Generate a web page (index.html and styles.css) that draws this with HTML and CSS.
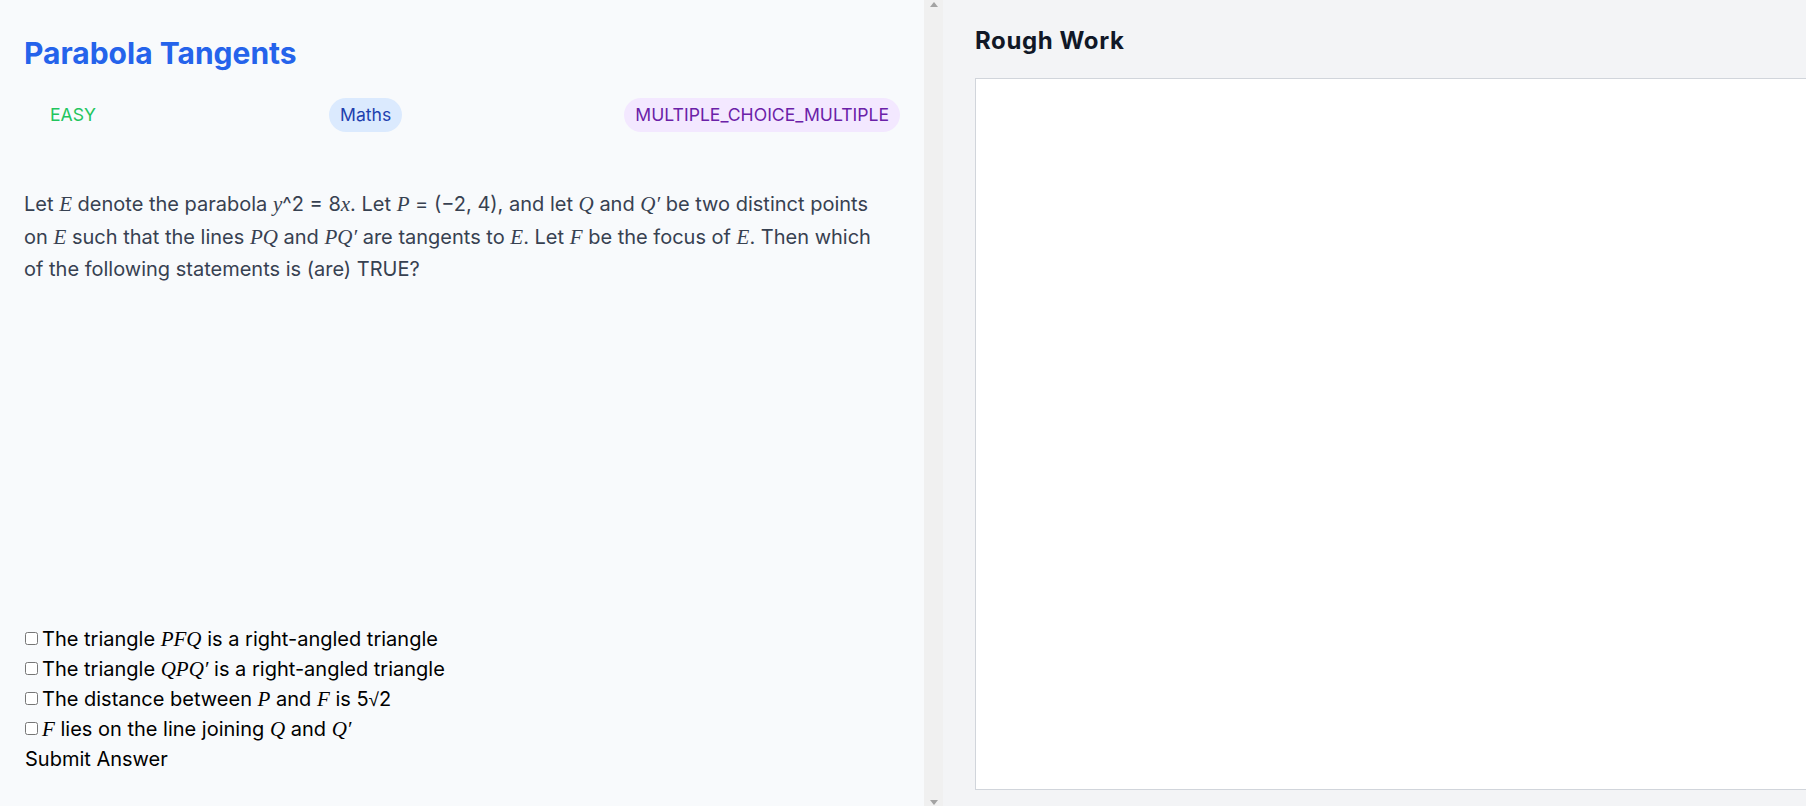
FILE: index.html
```html
<!DOCTYPE html>
<html lang="en">
<head>
<meta charset="utf-8">
<title>Parabola Tangents</title>
<link rel="stylesheet" href="styles.css">
</head>
<body>
<div class="app">
  <section class="question-panel">
    <h1 class="title">Parabola Tangents</h1>
    <div class="tags">
      <span class="tag tag-easy">EASY</span>
      <span class="tag tag-subject">Maths</span>
      <span class="tag tag-type">MULTIPLE_CHOICE_MULTIPLE</span>
    </div>
    <div class="question-body">
      <p class="question-text">Let <i class="m">E</i> denote the parabola <i class="m">y</i>^2 = 8<i class="m">x</i>. Let <i class="m">P</i> = (−2, 4), and let <i class="m">Q</i> and <i class="m">Q′</i> be two distinct points on <i class="m">E</i> such that the lines <i class="m">PQ</i> and <i class="m">PQ′</i> are tangents to <i class="m">E</i>. Let <i class="m">F</i> be the focus of <i class="m">E</i>. Then which of the following statements is (are) TRUE?</p>
    </div>
    <div class="options">
      <label class="option"><input type="checkbox" class="check">The triangle <i class="m">PFQ</i> is a right-angled triangle</label>
      <label class="option"><input type="checkbox" class="check">The triangle <i class="m">QPQ′</i> is a right-angled triangle</label>
      <label class="option"><input type="checkbox" class="check">The distance between <i class="m">P</i> and <i class="m">F</i> is 5<span class="sqrt">√</span>2</label>
      <label class="option"><input type="checkbox" class="check"><i class="m">F</i> lies on the line joining <i class="m">Q</i> and <i class="m">Q′</i></label>
      <button class="submit" type="button">Submit Answer</button>
    </div>
  </section>
  <div class="scrollbar" aria-hidden="true">
    <span class="arrow arrow-up"></span>
    <span class="arrow arrow-down"></span>
  </div>
  <section class="work-panel">
    <h2 class="work-title">Rough Work</h2>
    <div class="canvas"></div>
  </section>
</div>
</body>
</html>
```

FILE: styles.css
```css
html, body {
  margin: 0;
  padding: 0;
  height: 100%;
}
body {
  font-family: Inter, "Noto Sans", sans-serif;
  overflow: hidden;
}
.app {
  display: flex;
  height: 806px;
  width: 1806px;
}
.question-panel {
  flex: 0 0 924px;
  box-sizing: border-box;
  height: 100%;
  background: #f8fafc;
  padding: 24px 24px 32px 24px;
  display: flex;
  flex-direction: column;
}
.title {
  margin: 11px 0 0 0;
  font-size: 30px;
  line-height: 36px;
  font-weight: 700;
  color: #2563eb;
}
.tags {
  margin-top: 27px;
  padding-left: 15px;
  display: flex;
  justify-content: space-between;
  align-items: center;
}
.tag {
  font-size: 17.6px;
  line-height: 26px;
  padding: 4px 11px;
  border-radius: 999px;
}
.tag-easy {
  color: #22c55e;
}
.tag-subject {
  background: #dbeafe;
  color: #1e40af;
}
.tag-type {
  background: #f3e8ff;
  color: #6b21a8;
}
.question-body {
  flex: 1;
  margin-top: 56px;
}
.question-text {
  margin: 0 16px 0 0;
  font-size: 20px;
  line-height: 32.5px;
  color: #374151;
}
.m {
  font-family: "Liberation Serif", "DejaVu Serif", serif;
  font-style: italic;
  font-size: 1.05em;
}
.sqrt {
  font-family: "DejaVu Sans", sans-serif;
  font-weight: 300;
  font-size: 0.95em;
}
.options {
  display: flex;
  flex-direction: column;
  align-items: flex-start;
}
.option {
  font-size: 20px;
  line-height: 30px;
  color: #000;
  display: block;
}
.check {
  width: 13px;
  height: 13px;
  margin: 0 4px 0 1px;
  vertical-align: 1px;
}
.submit {
  font: inherit;
  font-size: 20px;
  line-height: 30px;
  color: #000;
  background: none;
  border: none;
  padding: 0;
  margin: 0 0 0 1px;
  cursor: pointer;
}
.scrollbar {
  flex: 0 0 19px;
  height: 100%;
  background: #f0f0f0;
  display: flex;
  flex-direction: column;
  justify-content: space-between;
  align-items: center;
  padding: 2px 0 1px 1px;
  box-sizing: border-box;
}
.arrow {
  width: 0;
  height: 0;
  border-left: 4.5px solid transparent;
  border-right: 4.5px solid transparent;
}
.arrow-up {
  border-bottom: 5px solid #a3a3a3;
}
.arrow-down {
  border-top: 5px solid #a3a3a3;
}
.work-panel {
  flex: 1;
  min-width: 0;
  box-sizing: border-box;
  height: 100%;
  background: #f3f4f6;
  padding: 25px 0 16px 32px;
  overflow: hidden;
  display: flex;
  flex-direction: column;
}
.work-title {
  margin: 0 0 21px 0;
  font-size: 24px;
  line-height: 32px;
  font-weight: 700;
  letter-spacing: 0.6px;
  color: #111827;
}
.canvas {
  flex: 1;
  width: 1000px;
  flex-shrink: 0;
  box-sizing: border-box;
  background: #ffffff;
  border: 1px solid #d1d5db;
}
```
